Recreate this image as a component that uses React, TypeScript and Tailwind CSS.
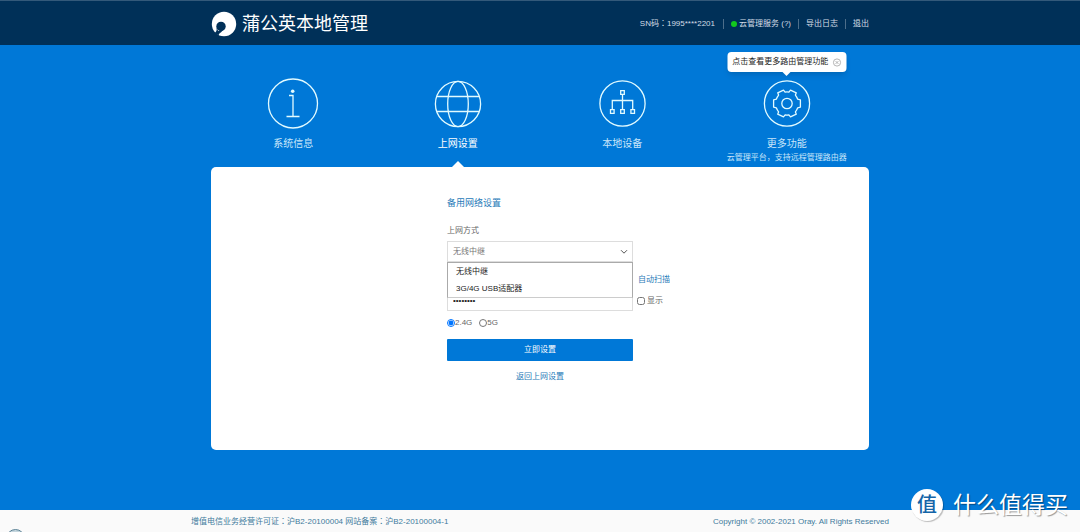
import { useState } from 'react';
import type { ReactNode } from 'react';

interface NavItem {
  id: string;
  label: string;
  note?: string;
  icon: ReactNode;
}

const navItems: NavItem[] = [
  { id: 'info', label: '系统信息', icon: <InfoIcon /> },
  { id: 'network', label: '上网设置', icon: <GlobeIcon /> },
  { id: 'devices', label: '本地设备', icon: <DevicesIcon /> },
  {
    id: 'more',
    label: '更多功能',
    note: '云管理平台，支持远程管理路由器',
    icon: <GearIcon />,
  },
];

const modes = ['无线中继', '3G/4G USB适配器'];

function Logo() {
  return (
    <svg viewBox="0 0 26 26" className="h-[26px] w-[26px]" aria-hidden="true">
      <circle cx="13" cy="13" r="12.2" fill="#fff" />
      <circle cx="10" cy="15.4" r="4.7" fill="#003058" />
      <path d="M5.6 16.5 Q6.4 19.5 8.4 21.2 L7.6 24.6 L3.6 22 Q6.2 20.5 5.6 16.5 Z" fill="#003058" />
      <path d="M8.6 19 L12 19 Q10.4 21.6 7.8 23 Z" fill="#003058" />
      <path d="M6.2 20.6 L10 19.4 L8.2 22 Z" fill="#003058" />
    </svg>
  );
}

function InfoIcon() {
  return (
    <svg viewBox="0 0 52 52" className="h-[52px] w-[52px]" fill="none" stroke="currentColor" strokeWidth="1.3">
      <circle cx="26" cy="26.5" r="24.5" />
      <circle cx="25.7" cy="14.3" r="1.8" fill="currentColor" stroke="none" />
      <path d="M22 18.5h4v20.5M19.5 39.5h13" />
    </svg>
  );
}

function GlobeIcon() {
  return (
    <svg viewBox="0 0 52 52" className="h-[52px] w-[52px]" fill="none" stroke="currentColor" strokeWidth="1.3">
      <circle cx="26" cy="27" r="22.6" />
      <ellipse cx="26" cy="27" rx="10.3" ry="22.6" />
      <path d="M5 19.5h42M5 34.5h42" />
    </svg>
  );
}

function DevicesIcon() {
  return (
    <svg viewBox="0 0 52 52" className="h-[52px] w-[52px]" fill="none" stroke="currentColor" strokeWidth="1.3">
      <circle cx="26.5" cy="26.5" r="22.6" />
      <path d="M24.7 13.7h3.6v3.6h-3.6zM14.5 32.7h3.6v3.6h-3.6zM24.7 32.7h3.6v3.6h-3.6zM34.9 32.7h3.6v3.6h-3.6z" />
      <path d="M26.5 17.3v15.4M16.3 32.7v-9.2h20.4v9.2" />
    </svg>
  );
}

function GearIcon() {
  return (
    <svg viewBox="0 0 52 52" className="h-[52px] w-[52px]" fill="none" stroke="currentColor" strokeWidth="1.3">
      <circle cx="26" cy="26.5" r="22.6" />
      <circle cx="26" cy="26.5" r="5.2" />
      <path
        strokeLinejoin="round"
        d="M39.4 22.9V30.1L36.7 30.8Q35.9 33 34.4 34.9L35.3 37.2L29.5 39.8L27.9 37.9Q26 38.2 24.1 37.9L22.5 39.8L16.7 37.2L17.6 34.9Q16.1 33 15.3 30.8L12.6 30.1V22.9L15.3 22.2Q16.1 20 17.6 18.1L16.7 15.8L22.5 13.2L24.1 15.1Q26 14.8 27.9 15.1L29.5 13.2L35.3 15.8L34.4 18.1Q35.9 20 36.7 22.2Z"
      />
    </svg>
  );
}

function Header() {
  return (
    <header className="border-t border-[#33597a] bg-[#003058]">
      <div className="mx-auto flex h-11 max-w-[658px] items-center justify-between pt-0.5">
        <div className="flex items-center gap-[5px] text-white">
          <Logo />
          <h1 className="text-[18px] leading-6">蒲公英本地管理</h1>
        </div>
        <div className="flex items-center font-['Liberation_Sans','Noto_Sans_CJK_TC',sans-serif] text-[8px] leading-[10px] text-[#d3dde6]">
          <span className="pr-2">SN码：1995****2201</span>
          <a href="#cloud" className="flex items-center gap-0.5 border-l border-[#4d6e8a] px-[7px]">
            <span className="h-1.5 w-1.5 rounded-full bg-[#12c81e]" />
            云管理服务 (?)
          </a>
          <a href="#log" className="border-l border-[#4d6e8a] px-[7px]">
            导出日志
          </a>
          <a href="#logout" className="border-l border-[#4d6e8a] pl-[7px]">
            退出
          </a>
        </div>
      </div>
    </header>
  );
}

function Tip({ onClose }: { onClose: () => void }) {
  return (
    <div className="absolute -top-[25px] left-1/2 z-10 flex h-5 -translate-x-1/2 items-center gap-1 rounded-sm bg-white px-[5px] text-[8px] whitespace-nowrap text-[#222] shadow-md">
      点击查看更多路由管理功能
      <button type="button" aria-label="关闭" onClick={onClose} className="text-[#999]">
        <svg viewBox="0 0 10 10" className="h-[9px] w-[9px]" fill="none" stroke="currentColor" strokeWidth="0.8">
          <circle cx="5" cy="5" r="4" />
          <path d="M3.4 3.4l3.2 3.2M6.6 3.4L3.4 6.6" />
        </svg>
      </button>
      <span className="absolute top-full left-1/2 -translate-x-1/2 border-x-4 border-t-4 border-x-transparent border-t-white" />
    </div>
  );
}

function NetworkForm() {
  const [mode, setMode] = useState(modes[0]);
  const [open, setOpen] = useState(true);
  const [show, setShow] = useState(false);
  const [band, setBand] = useState('2.4G');
  const [ssid, setSsid] = useState('');
  const [password, setPassword] = useState('12345678');

  return (
    <form
      className="grid grid-cols-[1fr_186px_1fr] text-[8px] leading-3 text-[#666]"
      onSubmit={(e) => e.preventDefault()}
    >
      <h2 className="col-start-2 text-[9px] leading-[14px] text-[#1f7ab8]">备用网络设置</h2>
      <label htmlFor="mode" className="col-start-2 mt-[15px]">
        上网方式
      </label>

      <div className="relative col-start-2 mt-1">
        <select
          id="mode"
          value={mode}
          onChange={(e) => setMode(e.target.value)}
          className="block h-[21px] w-full appearance-none border border-[#ddd] bg-white px-[5px] text-[#777]"
        >
          {modes.map((m) => (
            <option key={m}>{m}</option>
          ))}
        </select>
        <svg
          viewBox="0 0 8 6"
          className="pointer-events-none absolute top-2 right-[5px] h-1.5 w-2"
          fill="none"
          stroke="#555"
        >
          <path d="M1 1.2l3 3 3-3" />
        </svg>
        {open && (
          <ul
            role="listbox"
            aria-label="上网方式"
            className="absolute top-full left-0 z-10 w-full border border-[#aaa] border-b-[#ccc] bg-white text-[#222]"
          >
            {modes.map((m) => (
              <li
                key={m}
                role="option"
                aria-selected={m === mode}
                className="px-2 leading-[17px]"
                onClick={() => {
                  setMode(m);
                  setOpen(false);
                }}
              >
                {m}
              </li>
            ))}
          </ul>
        )}
      </div>

      <input
        aria-label="无线名称"
        value={ssid}
        onChange={(e) => setSsid(e.target.value)}
        className="col-start-2 mt-2 h-5 w-full border border-[#ddd] bg-white px-[5px]"
      />
      <div className="mt-2 flex items-center pl-[5px]">
        <a href="#scan" className="text-[#1f7ab8]">
          自动扫描
        </a>
      </div>

      <input
        aria-label="密码"
        type={show ? 'text' : 'password'}
        value={password}
        onChange={(e) => setPassword(e.target.value)}
        className="col-start-2 h-[21px] w-full border border-[#ddd] bg-white px-[5px] text-[#222]"
      />
      <label className="flex items-center gap-0.5 pl-1">
        <input
          type="checkbox"
          checked={show}
          onChange={(e) => setShow(e.target.checked)}
          className="h-2 w-2"
        />
        显示
      </label>

      <div className="col-start-2 mt-1.5 flex gap-[7px]">
        {['2.4G', '5G'].map((b) => (
          <label key={b} className="flex items-center">
            <input
              type="radio"
              name="band"
              checked={band === b}
              onChange={() => setBand(b)}
              className="h-2 w-2"
            />
            {b}
          </label>
        ))}
      </div>

      <button type="submit" className="col-start-2 mt-[10px] h-[22px] rounded-[1px] bg-[#0078d7] text-white">
        立即设置
      </button>
      <a href="#network" className="col-start-2 mt-[10px] justify-self-center text-[#1f7ab8]">
        返回上网设置
      </a>
    </form>
  );
}

function Watermark() {
  return (
    <div className="pointer-events-none absolute right-3 bottom-[11px] flex items-center gap-[10px] text-white">
      <span className="flex h-8 w-8 items-center justify-center rounded-full bg-white text-[20px] font-medium text-[#1565a8] shadow-[1px_1px_1px_rgba(0,0,0,0.25)]">
        值
      </span>
      <span className="text-[23px] leading-8 [text-shadow:1px_1px_1px_rgba(0,0,0,0.4)]">
        什么值得买
      </span>
    </div>
  );
}

export default function App() {
  const [active, setActive] = useState('network');
  const [tip, setTip] = useState(true);

  return (
    <div className="relative flex min-h-screen flex-col overflow-hidden bg-[#0078d7] font-['Liberation_Sans','Noto_Sans_CJK_SC',sans-serif]">
      <Header />

      <main className="mx-auto w-full max-w-[658px] grow pb-[60px]">
        <nav className="grid grid-cols-4 pt-8">
          {navItems.map((item) => (
            <div key={item.id} className="relative h-[90px]">
              {item.id === 'more' && tip && <Tip onClose={() => setTip(false)} />}
              <button
                type="button"
                onClick={() => setActive(item.id)}
                className={`flex w-full flex-col items-center ${item.id === active ? 'text-white' : 'text-[#c9e6fa]'}`}
              >
                <span className="text-[#e2fbff]">{item.icon}</span>
                <span className="mt-[7px] text-[10px] leading-4">{item.label}</span>
                {item.note && (
                  <span className="text-[8px] leading-3 whitespace-nowrap">{item.note}</span>
                )}
              </button>
              {item.id === active && (
                <span className="absolute bottom-0 left-1/2 -translate-x-1/2 border-x-[6px] border-b-[6px] border-x-transparent border-b-white" />
              )}
            </div>
          ))}
        </nav>

        <section className="rounded-[5px] bg-white pt-[29px] pb-[67px]">
          <NetworkForm />
        </section>
      </main>

      <footer className="bg-[#fafafa] pt-px font-['Liberation_Sans','Noto_Sans_CJK_TC',sans-serif] text-[8px] leading-[21px] text-[#3f7a9c]">
        <div className="mx-auto flex max-w-[698px] justify-between">
          <span>增值电信业务经营许可证：沪B2-20100004 网站备案：沪B2-20100004-1</span>
          <span>Copyright © 2002-2021 Oray. All Rights Reserved</span>
        </div>
      </footer>

      <span className="absolute -bottom-4 left-1.5 h-[19px] w-[19px] rounded-full border border-[#5b8296] bg-[#c5d6de]" />
      <Watermark />
    </div>
  );
}
